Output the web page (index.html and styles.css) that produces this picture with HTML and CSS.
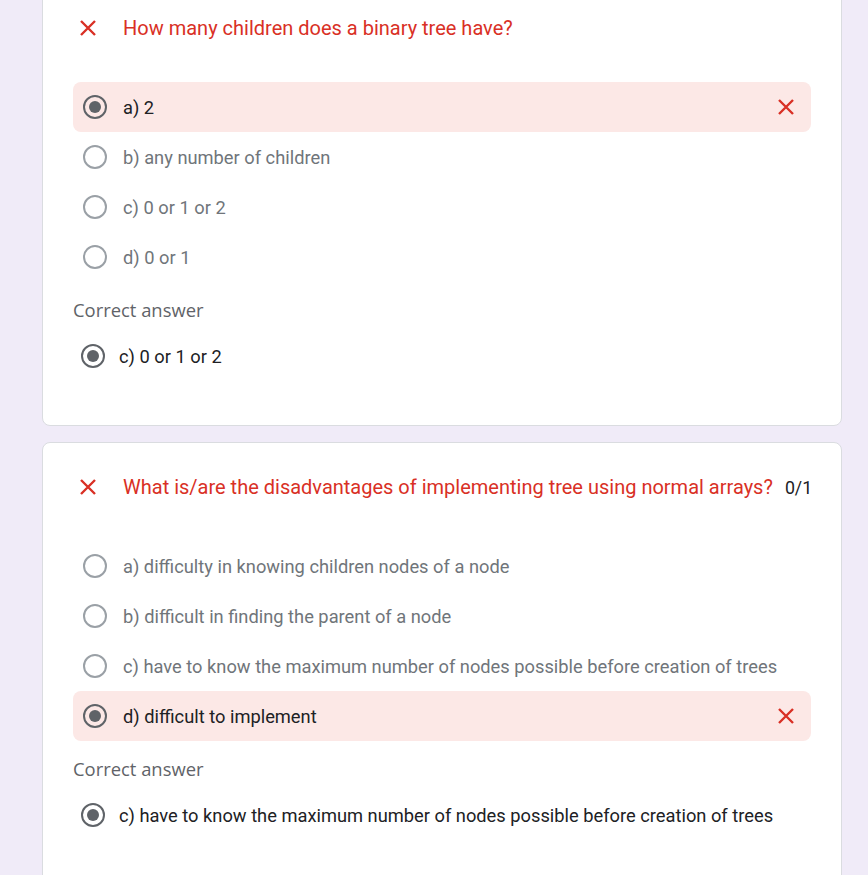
FILE: index.html
```html
<!DOCTYPE html>
<html>
<head>
<meta charset="utf-8">
<link rel="stylesheet" href="styles.css">
</head>
<body>
<div class="page">
  <section class="card card-first">
    <div class="question">
      <svg class="qx" viewBox="0 0 18 18"><path d="M2 2L16 16M16 2L2 16"/></svg>
      <span class="qtext">How many children does a binary tree have?</span>
    </div>
    <div class="options">
      <div class="opt wrong">
        <span class="radio on"></span><span class="otext">a) 2</span>
        <svg class="ox" viewBox="0 0 18 18"><path d="M2 2L16 16M16 2L2 16"/></svg>
      </div>
      <div class="opt"><span class="radio"></span><span class="otext">b) any number of children</span></div>
      <div class="opt"><span class="radio"></span><span class="otext">c) 0 or 1 or 2</span></div>
      <div class="opt"><span class="radio"></span><span class="otext">d) 0 or 1</span></div>
    </div>
    <div class="correct-label">Correct answer</div>
    <div class="correct"><span class="radio on"></span><span class="ctext">c) 0 or 1 or 2</span></div>
  </section>

  <section class="card">
    <div class="question">
      <svg class="qx" viewBox="0 0 18 18"><path d="M2 2L16 16M16 2L2 16"/></svg>
      <span class="qtext">What is/are the disadvantages of implementing tree using normal arrays?</span>
      <span class="score">0/1</span>
    </div>
    <div class="options">
      <div class="opt"><span class="radio"></span><span class="otext">a) difficulty in knowing children nodes of a node</span></div>
      <div class="opt"><span class="radio"></span><span class="otext">b) difficult in finding the parent of a node</span></div>
      <div class="opt"><span class="radio"></span><span class="otext">c) have to know the maximum number of nodes possible before creation of trees</span></div>
      <div class="opt wrong">
        <span class="radio on"></span><span class="otext">d) difficult to implement</span>
        <svg class="ox" viewBox="0 0 18 18"><path d="M2 2L16 16M16 2L2 16"/></svg>
      </div>
    </div>
    <div class="correct-label">Correct answer</div>
    <div class="correct"><span class="radio on"></span><span class="ctext">c) have to know the maximum number of nodes possible before creation of trees</span></div>
  </section>
</div>
</body>
</html>
```
FILE: styles.css
```css
* { box-sizing: border-box; }
html, body { margin: 0; padding: 0; }
body {
  background: #f0ebf8;
  font-family: Roboto, "Liberation Sans", Arial, sans-serif;
  height: 875px;
  overflow: hidden;
}
.page {
  margin-top: -17px;
  padding-left: 42px;
  display: flex;
  flex-direction: column;
  gap: 16px;
}
.card {
  width: 800px;
  background: #fff;
  border: 1px solid #dadce0;
  border-radius: 8px;
  padding: 32px 30px 57px 30px;
}
.question {
  display: flex;
  align-items: center;
  height: 24px;
  padding-left: 6px;
  white-space: nowrap;
}
.qx { width: 18px; height: 18px; flex: none; }
.qx path, .ox path { stroke: #d93025; stroke-width: 2.4; fill: none; }
.qtext {
  margin-left: 26px;
  color: #d93025;
  font-size: 20px;
  flex: none;
}
.score {
  color: #202124;
  font-size: 17.8px;
  margin-left: 12px;
  flex: none;
}
.options {
  margin-top: 42px;
  display: flex;
  flex-direction: column;
}
.opt {
  height: 50px;
  display: flex;
  align-items: center;
  padding-left: 10px;
  padding-right: 16px;
  border-radius: 8px;
  white-space: nowrap;
}
.opt.wrong { background: #fce8e6; }
.radio {
  width: 24px;
  height: 24px;
  border-radius: 50%;
  border: 2px solid #9aa0a6;
  flex: none;
  display: flex;
  align-items: center;
  justify-content: center;
}
.radio.on { border: 2.5px solid #5f6368; }
.radio.on::after {
  content: "";
  width: 12px;
  height: 12px;
  border-radius: 50%;
  background: #5f6368;
}
.otext {
  margin-left: 16px;
  font-size: 18.3px;
  color: #70757a;
  flex: 1;
}
.opt.wrong .otext { color: #202124; }
.ox { width: 18px; height: 18px; flex: none; }
.correct-label {
  margin-top: 16px;
  font-family: "Open Sans", Roboto, sans-serif;
  font-size: 18.4px;
  color: #5f6368;
  height: 24px;
  line-height: 24px;
}
.correct {
  margin-top: 22px;
  display: flex;
  align-items: center;
  padding-left: 8px;
  height: 24px;
  white-space: nowrap;
}
.ctext {
  margin-left: 14px;
  font-size: 18.3px;
  color: #202124;
}
```
